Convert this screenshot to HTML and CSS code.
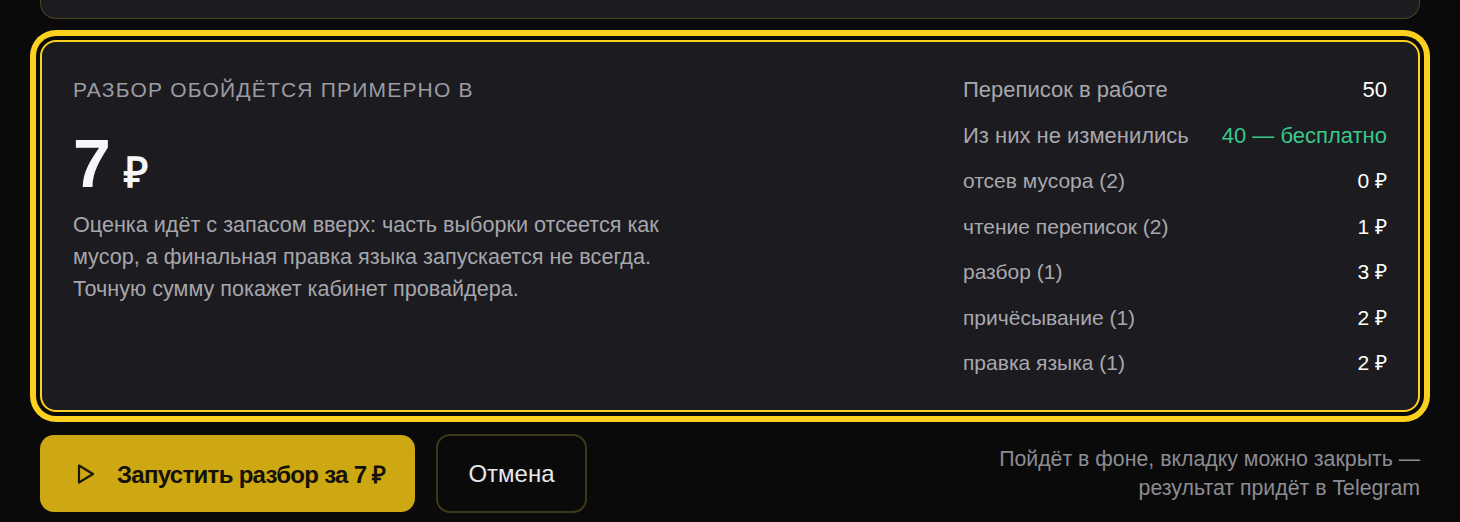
FILE: index.html
```html
<!DOCTYPE html>
<html lang="ru">
<head>
<meta charset="utf-8">
<link rel="stylesheet" href="styles.css">
</head>
<body>
<div class="page">
  <div class="prev-card"></div>
  <section class="estimate">
    <div class="estimate-main">
      <div class="eyebrow">Разбор обойдётся примерно в</div>
      <div class="total"><span class="total-num">7</span><span class="total-cur">₽</span></div>
      <p class="note">Оценка идёт с запасом вверх: часть выборки отсеется как мусор, а финальная правка языка запускается не всегда. Точную сумму покажет кабинет провайдера.</p>
    </div>
    <div class="breakdown">
      <div class="row row-big"><span class="lbl">Переписок в работе</span><span class="val">50</span></div>
      <div class="row row-big"><span class="lbl">Из них не изменились</span><span class="val val-free">40 — бесплатно</span></div>
      <div class="row"><span class="lbl">отсев мусора (2)</span><span class="val">0 ₽</span></div>
      <div class="row"><span class="lbl">чтение переписок (2)</span><span class="val">1 ₽</span></div>
      <div class="row"><span class="lbl">разбор (1)</span><span class="val">3 ₽</span></div>
      <div class="row"><span class="lbl">причёсывание (1)</span><span class="val">2 ₽</span></div>
      <div class="row"><span class="lbl">правка языка (1)</span><span class="val">2 ₽</span></div>
    </div>
  </section>
  <div class="actions">
    <button class="btn btn-primary">
      <svg class="play" width="18" height="22" viewBox="0 0 18 22" fill="none"><path d="M2 2.5 L16 11 L2 19.5 Z" stroke="#1a1608" stroke-width="2.2" stroke-linejoin="round"/></svg>
      <span>Запустить разбор за 7 ₽</span>
    </button>
    <button class="btn btn-ghost">Отмена</button>
    <div class="hint">Пойдёт в фоне, вкладку можно закрыть —<br>результат придёт в Telegram</div>
  </div>
</div>
</body>
</html>
```
FILE: styles.css
```css
* { box-sizing: border-box; }
html, body { margin: 0; padding: 0; }
body {
  background: #0a0a0a;
  font-family: "Liberation Sans", Arial, sans-serif;
  color: #f2f2f4;
}
.page {
  padding: 0 40px;
  display: flex;
  flex-direction: column;
}
.prev-card {
  height: 19px;
  background: #1c1b20;
  border: 1px solid #4d4322;
  border-top: none;
  border-radius: 0 0 16px 16px;
}
.estimate {
  margin-top: 21px;
  background: #1c1b20;
  border: 2px solid #fcd01e;
  border-radius: 16px;
  box-shadow: 0 0 0 4px #0a0a0a, 0 0 0 10px #fcd01e;
  height: 372px;
  padding: 35px 31px 0 31px;
  display: flex;
  justify-content: space-between;
}
.estimate-main { width: 620px; }
.eyebrow {
  text-transform: uppercase;
  letter-spacing: 1.2px;
  font-size: 21px;
  color: #9c9ca3;
  line-height: 26px;
}
.total {
  margin-top: 25px;
  display: flex;
  align-items: baseline;
  line-height: 70px;
}
.total-num {
  font-size: 68px;
  font-weight: 700;
  color: #f7f7f9;
}
.total-cur {
  font-size: 42px;
  font-weight: 700;
  margin-left: 13px;
  color: #f7f7f9;
}
.note {
  margin: 1px 0 0;
  font-size: 21.6px;
  line-height: 32px;
  color: #a6a6ac;
  max-width: 610px;
}
.breakdown {
  width: 424px;
  margin-top: -2px;
  display: flex;
  flex-direction: column;
}
.row {
  display: flex;
  justify-content: space-between;
  align-items: baseline;
  height: 45.5px;
  font-size: 21px;
  line-height: 30px;
}
.row-big { font-size: 22px; }
.lbl { color: #a8a8ae; }
.val { color: #ffffff; }
.val-free { color: #38c98a; }
.actions {
  margin-top: 22px;
  display: flex;
  align-items: center;
}
.btn {
  font-family: inherit;
  cursor: pointer;
  border-radius: 14px;
  height: 77px;
  font-size: 24px;
}
.btn-primary {
  width: 375px;
  background: #cda812;
  border: none;
  color: #141208;
  font-weight: 700;
  letter-spacing: -0.7px;
  display: flex;
  align-items: center;
  padding: 0 0 0 37px;
  gap: 22px;
}
.play { flex: none; }
.btn-ghost {
  margin-left: 21px;
  width: 151px;
  height: 79px;
  background: transparent;
  border: 2px solid #3f3719;
  color: #e8e8ea;
}
.hint {
  margin-left: auto;
  text-align: right;
  color: #8c8c92;
  font-size: 21.3px;
  line-height: 29px;
}
```
